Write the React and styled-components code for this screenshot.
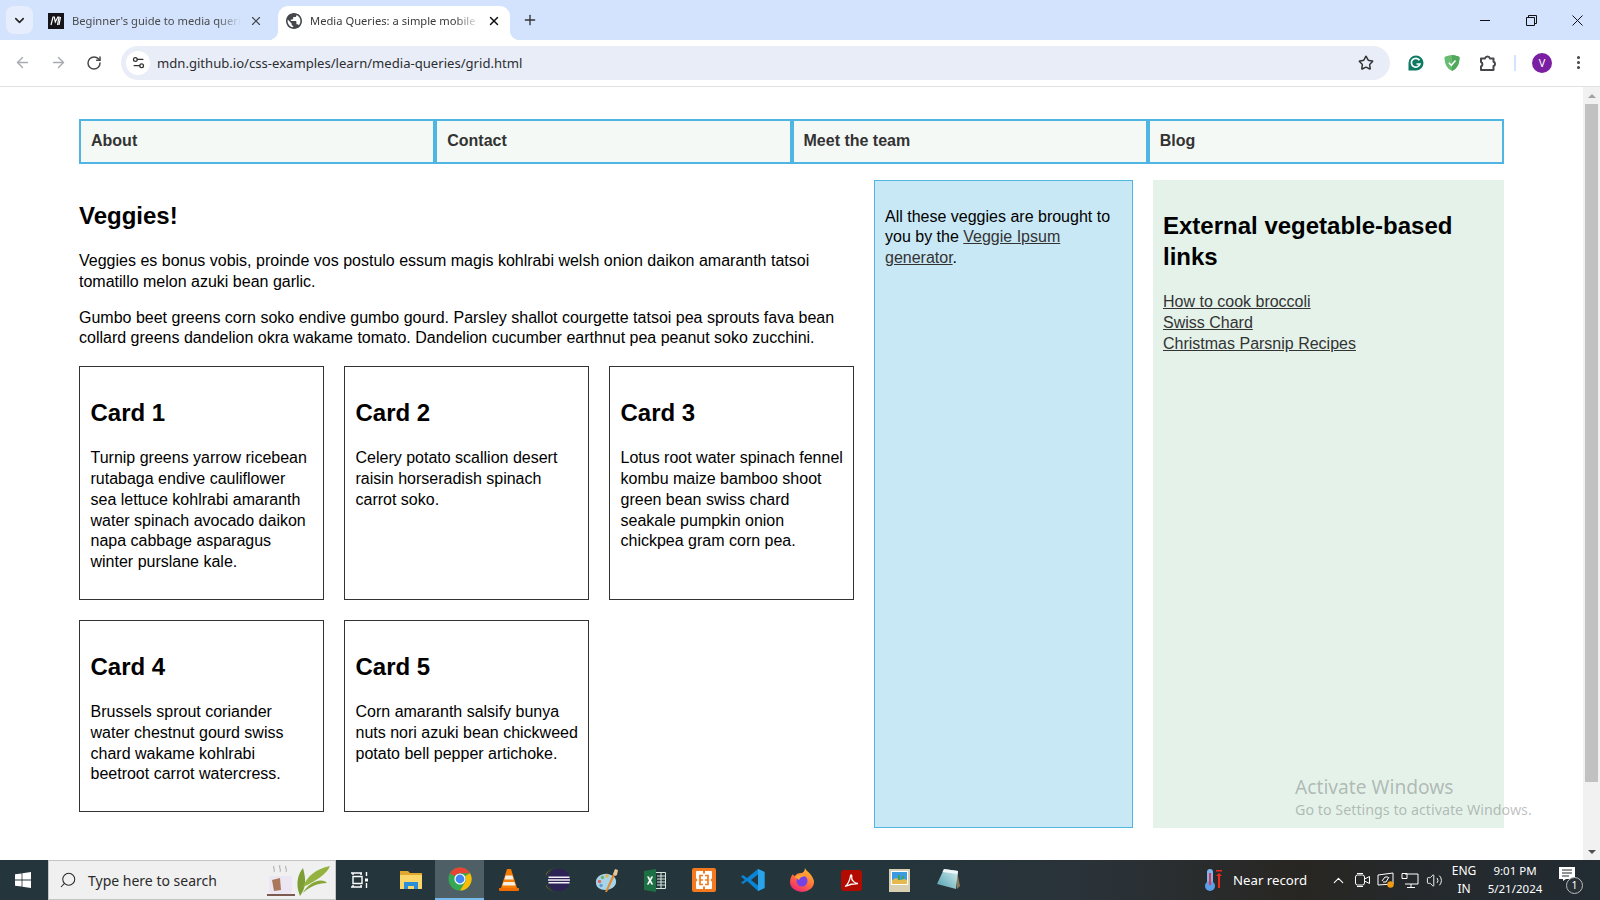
import styled, { createGlobalStyle } from 'styled-components';
import {
  ChevronDown, ChevronUp, X, Plus, ArrowLeft, ArrowRight, RotateCw, Star,
  EllipsisVertical, Settings2, Search, Volume2,
} from 'lucide-react';

const GlobalStyle = createGlobalStyle`
  html, body { margin: 0; padding: 0; height: 100%; overflow: hidden; }
  body { font-family: "Liberation Sans", Arial, sans-serif; background: #fff; }
  * { box-sizing: border-box; }
`;

const Screen = styled.div`
  width: 1600px;
  height: 900px;
  display: flex;
  flex-direction: column;
  position: relative;
  overflow: hidden;
`;

/* browser chrome */
const TabStrip = styled.div`
  height: 40px;
  background: #d3e3fd;
  display: flex;
  align-items: flex-end;
  padding-left: 6px;
  flex-shrink: 0;
`;
const TabSearch = styled.div`
  width: 27px;
  height: 28px;
  margin: 0 1px 6px 0;
  border-radius: 8px;
  background: #e6eefd;
  display: flex;
  align-items: center;
  justify-content: center;
  color: #222;
`;
const Tab = styled.div`
  position: relative;
  width: ${p => p.$w}px;
  height: 34px;
  display: flex;
  align-items: center;
  padding: 0 ${p => p.$pr}px 5px ${p => p.$pl}px;
  gap: 8px;
  border-radius: 10px 10px 0 0;
  background: ${p => (p.$active ? '#fff' : 'transparent')};
  color: ${p => (p.$active ? '#3a3a3a' : '#4a4a4a')};
  font: 11.2px "Noto Sans", sans-serif;

  ${p => p.$active && `
    &::before, &::after {
      content: '';
      position: absolute;
      bottom: 0;
      width: 10px;
      height: 10px;
    }
    &::before {
      left: -10px;
      background: radial-gradient(circle at 0 0, transparent 10px, #fff 10.5px);
    }
    &::after {
      right: -10px;
      background: radial-gradient(circle at 100% 0, transparent 10px, #fff 10.5px);
    }
  `}
`;
const TabTitle = styled.span`
  flex: 1;
  overflow: hidden;
  white-space: nowrap;
  -webkit-mask-image: linear-gradient(to right, #000 86%, transparent 100%);
  mask-image: linear-gradient(to right, #000 86%, transparent 100%);
`;
const NewTab = styled.div`
  margin: 0 0 8px 12px;
  height: 24px;
  display: flex;
  align-items: center;
  color: #333;
`;
const WindowButtons = styled.div`
  margin-left: auto;
  align-self: stretch;
  display: flex;
`;
const WindowButton = styled.div`
  width: 46px;
  display: flex;
  align-items: center;
  justify-content: center;
`;
const Toolbar = styled.div`
  height: 47px;
  background: #fff;
  border-bottom: 1px solid #e2e2e2;
  border-radius: 10px 10px 0 0;
  display: flex;
  align-items: center;
  padding: 0 0 1px 4px;
  flex-shrink: 0;
`;
const NavIcon = styled.div`
  width: 36px;
  display: flex;
  justify-content: center;
  color: ${p => (p.$off ? '#a8abb0' : '#45474a')};
`;
const Omnibox = styled.div`
  margin-left: 9px;
  width: 1269px;
  height: 34px;
  border-radius: 17px;
  background: #e9edf7;
  display: flex;
  align-items: center;
  padding: 0 16px 0 5px;
`;
const SiteButton = styled.div`
  width: 24px;
  height: 24px;
  border-radius: 50%;
  background: #fff;
  display: flex;
  align-items: center;
  justify-content: center;
  color: #333;
  margin-right: 7px;
`;
const Url = styled.div`
  flex: 1;
  font: 13.1px "Noto Sans", sans-serif;
  color: #2b2d31;
`;
const ToolIcons = styled.div`
  flex: 1;
  display: flex;
  align-items: center;
  padding-left: 8px;
  color: #45474a;
`;
const ToolIcon = styled.div`
  width: 36px;
  display: flex;
  justify-content: center;
`;
const ToolDivider = styled.div`
  width: 2px;
  height: 16px;
  background: #d3e3fd;
  margin: 0 8px;
`;
const Avatar = styled.div`
  width: 20px;
  height: 20px;
  border-radius: 50%;
  background: #7b1fa2;
  color: #fff;
  font: 11px "Noto Sans", sans-serif;
  display: flex;
  align-items: center;
  justify-content: center;
`;

/* page */
const Viewport = styled.div`
  flex: 1;
  display: flex;
  min-height: 0;
`;
const Page = styled.div`
  flex: 1;
  min-width: 0;
  padding: 32px 79px 0;
  overflow: hidden;
  font-size: 16px;
  line-height: 20.8px;
  color: #000;
`;
const TopNav = styled.ul`
  list-style: none;
  display: flex;
  margin: 0 0 16px;
  padding: 0;
`;
const TopNavItem = styled.li`
  flex: 1;
  height: 45px;
  border: 2.5px solid #4fb6e3;
  background: #f5f9f6;
  padding: 0 10px 1px;
  display: flex;
  align-items: center;
  font-weight: 700;
  color: #333;
`;
const Columns = styled.div`
  display: grid;
  grid-template-columns: 775px 259px 351px;
  gap: 20px;
`;
const Main = styled.main``;
const Title = styled.h1`
  font-size: 24px;
  line-height: 30px;
  margin: 21px 0 20px;
`;
const Para = styled.p`
  margin: 0 0 15px;
`;
const CardGrid = styled.div`
  display: grid;
  grid-template-columns: repeat(3, 245px);
  gap: 20px;
  margin-top: 17px;
`;
const Card = styled.article`
  border: 1px solid #333;
  padding: 0 9px 0 10.5px;
`;
const CardTitle = styled.h2`
  font-size: 24px;
  line-height: 30px;
  margin: 31px 0 20px;
`;
const CardText = styled.p`
  margin: 0 0 26px;
`;
const Credit = styled.aside`
  height: 648px;
  background: #c9e8f5;
  border: 1px solid #4fb6e3;
  padding: 25.5px 10px;
`;
const Links = styled.aside`
  height: 648px;
  background: #e4f2ea;
  padding: 30px 10px;
`;
const LinksTitle = styled.h2`
  font-size: 24px;
  line-height: 31px;
  margin: 0 0 20px;
`;
const LinkList = styled.ul`
  list-style: none;
  margin: 0;
  padding: 0;
`;
const PageLink = styled.a`
  color: #333;
  text-decoration: underline;
`;
const Scrollbar = styled.div`
  width: 17px;
  background: #f1f1f1;
  display: flex;
  flex-direction: column;
  align-items: center;
  justify-content: space-between;
  position: relative;
  flex-shrink: 0;
`;
const ScrollArrow = styled.div`
  width: 0;
  height: 0;
  margin: 7px 0 6px;
  border-left: 4px solid transparent;
  border-right: 4px solid transparent;
  ${p => (p.$down
    ? `border-top: 4px solid ${p.$c};`
    : `border-bottom: 4px solid ${p.$c};`)}
`;
const ScrollThumb = styled.div`
  position: absolute;
  top: 17px;
  left: 2px;
  width: 13px;
  height: 678px;
  background: #c1c1c1;
`;
const Activate = styled.div`
  position: absolute;
  left: 1295px;
  top: 774px;
  color: rgba(80, 80, 80, 0.36);
  font: 14.3px "Noto Sans", sans-serif;
  pointer-events: none;
  line-height: 21px;
`;
const ActivateTitle = styled.div`
  font-size: 19.2px;
  line-height: 25px;
`;

/* taskbar */
const Taskbar = styled.div`
  height: 40px;
  background: linear-gradient(to right, #25353c 0, #25353c 900px, #2a3238 1100px, #282622 1300px, #25292c 1420px, #222c33 1600px);
  display: flex;
  align-items: stretch;
  flex-shrink: 0;
  color: #fff;
`;
const StartButton = styled.div`
  width: 45px;
  margin-right: 3px;
  display: flex;
  align-items: center;
  justify-content: center;
`;
const SearchBox = styled.div`
  width: 288px;
  background: #f0f0f0;
  border: 1px solid #c4c4c4;
  color: #2a2a2a;
  display: flex;
  align-items: center;
  padding: 0 4px 0 10px;
  gap: 11px;
  font: 14px "Noto Sans", sans-serif;
`;
const SearchText = styled.span`
  flex: 1;
`;
const TaskIcons = styled.div`
  display: flex;
`;
const TaskIcon = styled.div`
  width: 48.9px;
  display: flex;
  align-items: center;
  justify-content: center;
  background: ${p => (p.$active ? '#4f5f66' : 'transparent')};
  border-bottom: ${p => (p.$active ? '2px solid #76b9ed' : '0')};

  &:first-child {
    width: 50.6px;
    padding-right: 2px;
  }
`;
const Tray = styled.div`
  margin-left: auto;
  display: flex;
  align-items: center;
  padding-right: 10px;
  font: 13.2px "Noto Sans", sans-serif;
`;
const Weather = styled.div`
  display: flex;
  align-items: center;
  gap: 7px;
  margin-right: 19px;
  white-space: nowrap;
`;
const TrayIcon = styled.div`
  width: 24px;
  display: flex;
  justify-content: center;
`;
const Lang = styled.div`
  width: 36px;
  text-align: center;
  font-size: 12px;
  line-height: 18.5px;
`;
const Clock = styled.div`
  width: 60px;
  margin-left: 3px;
  margin-right: -1px;
  white-space: nowrap;
  display: flex;
  flex-direction: column;
  align-items: center;
  font-size: 11.5px;
  line-height: 18.5px;
`;
const Notify = styled.div`
  position: relative;
  width: 46px;
  height: 26px;
  display: flex;
  justify-content: center;
`;
const NotifyBadge = styled.div`
  position: absolute;
  left: 22px;
  top: 10px;
  width: 17px;
  height: 17px;
  border-radius: 50%;
  border: 1px solid #bbb;
  background: #2a3136;
  font-size: 10.5px;
  line-height: 15px;
  text-align: center;
`;

const MdnIcon = () => (
  <svg width="16" height="16" viewBox="0 0 16 16">
    <rect width="16" height="16" fill="#15141a" />
    <path d="M3 12 5 4h1.3l1 5 2.5-5H11l-1.5 8M12.5 4 11 12" stroke="#fff" fill="none" strokeWidth="1.2" />
  </svg>
);
const GlobeIcon = () => (
  <svg width="16" height="16" viewBox="2 2 20 20">
    <path fill="#45474a" d="M12 2C6.48 2 2 6.48 2 12s4.48 10 10 10 10-4.48 10-10S17.52 2 12 2zm-1 17.93c-3.95-.49-7-3.85-7-7.93 0-.62.08-1.21.21-1.79L9 15v1c0 1.1.9 2 2 2v1.93zm6.9-2.54c-.26-.81-1-1.39-1.9-1.39h-1v-3c0-.55-.45-1-1-1H8v-2h2c.55 0 1-.45 1-1V7h2c1.1 0 2-.9 2-2v-.41c2.93 1.19 5 4.06 5 7.41 0 2.08-.8 3.97-2.1 5.39z" />
  </svg>
);
const WinMinimize = () => (
  <svg width="10" height="10" viewBox="0 0 10 10" stroke="#111"><path d="M0 5.5h10" /></svg>
);
const WinRestore = () => (
  <svg width="11" height="11" viewBox="0 0 11 11" fill="none" stroke="#111">
    <path d="M.5 2.5h8v8h-8zM2.5 2.5v-2h8v8h-2" />
  </svg>
);
const WinClose = () => (
  <svg width="11" height="11" viewBox="0 0 11 11" fill="none" stroke="#111"><path d="M.5.5l10 10M10.5.5l-10 10" /></svg>
);
const ExtensionIcon = () => (
  <svg width="18" height="18" viewBox="0 0 18 18" fill="none" stroke="#45474a" strokeWidth="2" strokeLinejoin="round">
    <path d="M2 4.5h4a2.6 2.6 0 0 1 5 0h3.5v3.300a2.200 2.200 0 0 1 0 4.200v4H2v-3.500a2.500 2.500 0 0 0 0-4.500z" />
  </svg>
);
const WinLogo = () => (
  <svg width="16" height="16" viewBox="0 0 16 16" fill="#fff">
    <path d="M0 2.3 6.6 1.4V7.6H0zM7.4 1.3 16 0V7.6H7.4zM0 8.4H6.6V14.6L0 13.7zM7.4 8.4H16V16L7.4 14.7z" />
  </svg>
);
const TeaLeaf = () => (
  <svg width="64" height="34" viewBox="0 0 64 34">
    <path d="M2 13h23v14a4 4 0 0 1-4 4H6a4 4 0 0 1-4-4z" fill="#ece6f3" />
    <path d="M5 17l8-2 1 12-7 1z" fill="#a9775a" />
    <path d="M0 31h28v2H0z" fill="#7b5a50" />
    <path d="M7 3c-2 2 2 3 0 6M13 2c-2 3 2 4 0 7M19 3c-2 2 2 3 0 6" stroke="#b5b5b5" strokeWidth="1.2" fill="none" />
    <path d="M33 33c5-7 7-14 3-28-5 6-8 16-3 28z" fill="#7d9e35" />
    <path d="M36 24C40 13 49 6 63 3c-3 8-14 15-27 21z" fill="#94b23f" />
    <path d="M36 30c6-6 15-10 24-10-6-6-19 0-24 10z" fill="#86a637" />
  </svg>
);
const TaskView = () => (
  <svg width="18" height="16" viewBox="0 0 18 16" fill="none" stroke="#fff" strokeWidth="1.4">
    <path d="M0 1h11M0 15h11M2 4.5h9v7H2zM2 1v2M10 1v2M2 13v2M10 13v2M15.5 0v4M15.5 11v5" />
    <path d="M14 6.5h3v3h-3z" fill="#fff" stroke="none" />
  </svg>
);
const Explorer = () => (
  <svg width="22" height="20" viewBox="0 0 22 20">
    <path d="M0 1h8l2 2h12v15a1 1 0 0 1-1 1H0z" fill="#e0a82e" />
    <path d="M0 5h22v13a1 1 0 0 1-1 1H0z" fill="#fbd66a" />
    <path d="M4 12h14v7h-4v-3H8v3H4z" fill="#2b8fd8" />
  </svg>
);
const Chrome = () => (
  <svg width="24" height="24" viewBox="0 0 24 24">
    <circle cx="12" cy="12" r="11.5" fill="#34a853" />
    <path d="M12 .5A11.5 11.5 0 0 1 22 6.2H12A6 6 0 0 0 6.7 9.2L2.1 6.2A11.5 11.5 0 0 1 12 .5z" fill="#ea4335" />
    <path d="M22 6.2A11.5 11.5 0 0 1 12 23.5L17.2 15A6 6 0 0 0 17.2 9z" fill="#fbbc05" />
    <circle cx="12" cy="12" r="5.6" fill="#fff" />
    <circle cx="12" cy="12" r="4.4" fill="#4285f4" />
  </svg>
);
const Vlc = () => (
  <svg width="20" height="24" viewBox="0 0 20 24">
    <path d="M8 1h4l6 19H2z" fill="#f57c00" />
    <path d="M6.6 7.5h6.8l1.2 4H5.4zM4.6 14h10.800l1.200 3.500H3.400z" fill="#f5efe6" />
    <path d="M0 20h20v2a1 1 0 0 1-1 1H1a1 1 0 0 1-1-1z" fill="#ef6c00" />
  </svg>
);
const Eclipse = () => (
  <svg width="24" height="24" viewBox="0 0 24 24">
    <path d="M11 0a12 12 0 0 0 0 24A12 11.5 0 0 1 11 0z" fill="#f7941e" />
    <circle cx="13" cy="12" r="11" fill="#2c2255" />
    <path d="M2.5 8.5h21V10h-21zM2 11.3h22v1.500H2zM2.500 14h21v1.500h-21z" fill="#f4f1f8" />
  </svg>
);
const Palette = () => (
  <svg width="24" height="24" viewBox="0 0 24 24">
    <path d="M1 15C0 9 7 5 13 6c5 1 9 4 8 9-1 4-5 7-11 7-5 0-9-3-9-7z" fill="#a9d3e6" />
    <circle cx="4.5" cy="13.5" r="1.7" fill="#e06666" />
    <circle cx="7.5" cy="9.5" r="1.7" fill="#70b070" />
    <circle cx="12" cy="8" r="1.7" fill="#e6b24a" />
    <circle cx="6" cy="17.5" r="1.7" fill="#5aa0d0" />
    <path d="M10 24 18 6l2 1-8 17z" fill="#e08a2e" />
    <path d="M18 6l2-5 3 1-1 5-2 1z" fill="#e7c79a" />
  </svg>
);
const Excel = () => (
  <svg width="22" height="23" viewBox="0 0 22 23">
    <path d="M12 3.5h9.5v16H12M13 7h8M13 10h8M13 13h8M13 16h8M17 4v15" fill="none" stroke="#d8e7dc" />
    <path d="M0 2 12 0v23L0 21z" fill="#1d7044" />
    <path d="M3 7.5h2l1 2.4 1.2-2.4h2L7 11.5l2.3 4h-2L6 13l-1.200 2.500h-2L5 11.500z" fill="#fff" />
  </svg>
);
const Xampp = () => (
  <svg width="24" height="24" viewBox="0 0 24 24">
    <rect width="24" height="24" rx="2" fill="#f37a20" />
    <path d="M5 3h6v2.500h2V3h6a1 1 0 0 1 1 1v6l-1.500 2L20 14v6a1 1 0 0 1-1 1h-6v-2.500h-2V21H5a1 1 0 0 1-1-1v-6l1.500-2L4 10V4a1 1 0 0 1 1-1z" fill="#fff" />
    <path d="M11 7.5H8v9h3M8 12h3M13 7.5h3v9h-3M16 12h-3" fill="none" stroke="#f37a20" strokeWidth="1.7" />
  </svg>
);
const VsCode = () => (
  <svg width="24" height="24" viewBox="0 0 24 24">
    <path d="M17 1 23.5 4v16L17 23 6 13l-4 3-2-1.5L4 12 0 8.5 2 7l4 3z" fill="#0a84d6" />
    <path d="M17 6.5 10 12l7 5.5z" fill="#25353c" />
    <path d="M17 1 23.5 4v16L17 23z" fill="#2aa3ea" />
  </svg>
);
const Firefox = () => (
  <svg width="24" height="24" viewBox="0 0 24 24">
    <defs>
      <linearGradient id="foxBody" x1="0.8" y1="0" x2="0.2" y2="1">
        <stop offset="0" stopColor="#ffc42e" />
        <stop offset="0.5" stopColor="#ff7139" />
        <stop offset="1" stopColor="#f0207a" />
      </linearGradient>
    </defs>
    <path d="M15 0c1 3 4 4 6 7 2 3 3 5 3 7a12 10 0 0 1-24 0c0-3 1-6 3-8 0 1 1 2 2 2 1-2 3-3 6-3 2 0 4-2 4-5z" fill="url(#foxBody)" />
    <circle cx="12" cy="13" r="5.5" fill="#7542e5" />
    <path d="M5 9c2-3 8-3 11-1-3 0-6 1-7 4z" fill="#ffa436" />
  </svg>
);
const Acrobat = () => (
  <svg width="21" height="21" viewBox="0 0 21 21">
    <rect width="21" height="21" rx="3" fill="#b30b00" />
    <path d="M4 16.5c2.500-1.500 5-6.500 5.500-10.500.3-2 1.700-1 1.200 1-.5 3 2.800 6.500 6.300 6.500-4 0-9 1-13 3z" fill="none" stroke="#fff" strokeWidth="1.3" />
  </svg>
);
const Pictures = () => (
  <svg width="21" height="23" viewBox="0 0 21 23">
    <rect width="21" height="23" fill="#d9d0b4" />
    <rect x="2" y="2" width="17" height="14" fill="#fff" />
    <rect x="3" y="3" width="15" height="12" fill="#3b9ae0" />
    <path d="M3 11l4-2 5 2 3-1 3 1v4H3z" fill="#e4b94e" />
    <path d="M9 6h2v5H9zM13 7h2v3h-2z" fill="#3fa45b" />
  </svg>
);
const Notepad = () => (
  <svg width="23" height="22" viewBox="0 0 23 22">
    <defs>
      <linearGradient id="padFace" x1="0" y1="1" x2="1" y2="0">
        <stop offset="0" stopColor="#4e9fae" />
        <stop offset="1" stopColor="#d6eef0" />
      </linearGradient>
    </defs>
    <path d="M20 2l3 15-3 3z" fill="#8a7a55" />
    <path d="M7 0l14 2-2 18L0 15z" fill="url(#padFace)" />
    <path d="M7 0l14 2-.5 3L5.5 3z" fill="#eef6f7" />
  </svg>
);
const Grammarly = () => (
  <svg width="16" height="16" viewBox="0 0 16 16">
    <path d="M8 .5a7.5 7.5 0 1 1 0 15H.5V8A7.5 7.5 0 0 1 8 .5z" fill="#0f7a63" />
    <path d="M11.5 5.3A4.4 4.4 0 1 0 12 9H8.5" fill="none" stroke="#fff" strokeWidth="1.7" />
  </svg>
);
const Shield = () => (
  <svg width="16" height="16" viewBox="0 0 16 16">
    <path d="M8 0C5.5 0 2.5 1 .5 2c0 6 1.5 11 7.5 14 6-3 7.500-8 7.500-14C13.500 1 10.500 0 8 0z" fill="#68bc71" />
    <path d="M8 0c2.5 0 5.5 1 7.5 2 0 6-1.500 11-7.500 14z" fill="#4fa85c" />
    <path d="M4.8 7.8 7.3 10.300 11.500 5.500" fill="none" stroke="#fff" strokeWidth="1.5" />
  </svg>
);
const Thermo = () => (
  <svg width="22" height="24" viewBox="0 0 22 24">
    <rect x="3" y="1" width="6" height="16" rx="3" fill="#7cb6ee" />
    <circle cx="6" cy="18" r="5" fill="#5b9fe8" />
    <rect x="5" y="5" width="2" height="12" fill="#e8344a" />
    <path d="M12 2h6v1.6h-6zM15 5l3 3h-2v12h-2V8h-2z" fill="#ee2a1e" />
  </svg>
);
const Meet = () => (
  <svg width="17" height="18" viewBox="0 0 17 18" fill="none" stroke="#fff">
    <path d="M3 2.5h6M3 15.5h6M1.5 6a2 2 0 0 1 2-2h5a2 2 0 0 1 2 2v6a2 2 0 0 1-2 2h-5a2 2 0 0 1-2-2zM10.5 8l5-2.500v7l-5-2.500" />
  </svg>
);
const Sync = () => (
  <svg width="18" height="18" viewBox="0 0 18 18">
    <path d="M1 4l15-2v11l-15 1z" fill="none" stroke="#fff" />
    <path d="M5 10l3-4h3M12 6l-3 5H6" fill="none" stroke="#fff" />
    <circle cx="13.5" cy="13.5" r="3.2" fill="#f39c12" />
  </svg>
);
const Network = () => (
  <svg width="18" height="16" viewBox="0 0 18 16" fill="none" stroke="#fff">
    <path d="M4 2h13v10H4M10 12v3M6 15.5h8M1 1.5h5v5H1z" />
  </svg>
);
const Message = () => (
  <svg width="16" height="14" viewBox="0 0 16 14">
    <path d="M0 0h16v12H7l-3 2v-2H0z" fill="#fff" />
    <path d="M3 3h10M3 6h10M3 9h7" stroke="#222b30" />
  </svg>
);

const navItems = ['About', 'Contact', 'Meet the team', 'Blog'];

const cards = [
  { title: 'Card 1', text: 'Turnip greens yarrow ricebean rutabaga endive cauliflower sea lettuce kohlrabi amaranth water spinach avocado daikon napa cabbage asparagus winter purslane kale.' },
  { title: 'Card 2', text: 'Celery potato scallion desert raisin horseradish spinach carrot soko.' },
  { title: 'Card 3', text: 'Lotus root water spinach fennel kombu maize bamboo shoot green bean swiss chard seakale pumpkin onion chickpea gram corn pea.' },
  { title: 'Card 4', text: 'Brussels sprout coriander water chestnut gourd swiss chard wakame kohlrabi beetroot carrot watercress.' },
  { title: 'Card 5', text: 'Corn amaranth salsify bunya nuts nori azuki bean chickweed potato bell pepper artichoke.' },
];

const links = ['How to cook broccoli', 'Swiss Chard', 'Christmas Parsnip Recipes'];

const taskIcons = [TaskView, Explorer, Chrome, Vlc, Eclipse, Palette, Excel, Xampp, VsCode, Firefox, Acrobat, Pictures, Notepad];

export default function App() {
  return (
    <Screen>
      <GlobalStyle />
      <TabStrip>
        <TabSearch><ChevronDown size={15} strokeWidth={2.5} /></TabSearch>
        <Tab $w={244} $pl={14} $pr={15}>
          <MdnIcon />
          <TabTitle>Beginner's guide to media queries</TabTitle>
          <X size={14} color="#444" />
        </Tab>
        <Tab $w={232} $pl={8} $pr={9} $active>
          <GlobeIcon />
          <TabTitle>Media Queries: a simple mobile first</TabTitle>
          <X size={14} color="#111" strokeWidth={2.5} />
        </Tab>
        <NewTab><Plus size={16} strokeWidth={2} /></NewTab>
        <WindowButtons>
          <WindowButton><WinMinimize /></WindowButton>
          <WindowButton><WinRestore /></WindowButton>
          <WindowButton><WinClose /></WindowButton>
        </WindowButtons>
      </TabStrip>
      <Toolbar>
        <NavIcon $off><ArrowLeft size={17} /></NavIcon>
        <NavIcon $off><ArrowRight size={17} /></NavIcon>
        <NavIcon><RotateCw size={16} strokeWidth={2.2} /></NavIcon>
        <Omnibox>
          <SiteButton><Settings2 size={15} /></SiteButton>
          <Url>mdn.github.io/css-examples/learn/media-queries/grid.html</Url>
          <Star size={16} strokeWidth={2.2} color="#333" />
        </Omnibox>
        <ToolIcons>
          <ToolIcon><Grammarly /></ToolIcon>
          <ToolIcon><Shield /></ToolIcon>
          <ToolIcon><ExtensionIcon /></ToolIcon>
          <ToolDivider />
          <ToolIcon><Avatar>V</Avatar></ToolIcon>
          <ToolIcon><EllipsisVertical size={17} strokeWidth={2.4} /></ToolIcon>
        </ToolIcons>
      </Toolbar>
      <Viewport>
        <Page>
          <TopNav>
            {navItems.map(item => <TopNavItem key={item}>{item}</TopNavItem>)}
          </TopNav>
          <Columns>
            <Main>
              <Title>Veggies!</Title>
              <Para>Veggies es bonus vobis, proinde vos postulo essum magis kohlrabi welsh onion daikon amaranth tatsoi tomatillo melon azuki bean garlic.</Para>
              <Para>Gumbo beet greens corn soko endive gumbo gourd. Parsley shallot courgette tatsoi pea sprouts fava bean collard greens dandelion okra wakame tomato. Dandelion cucumber earthnut pea peanut soko zucchini.</Para>
              <CardGrid>
                {cards.map(card => (
                  <Card key={card.title}>
                    <CardTitle>{card.title}</CardTitle>
                    <CardText>{card.text}</CardText>
                  </Card>
                ))}
              </CardGrid>
            </Main>
            <Credit>All these veggies are brought to you by the <PageLink href="#">Veggie Ipsum generator</PageLink>.</Credit>
            <Links>
              <LinksTitle>External vegetable-based links</LinksTitle>
              <LinkList>
                {links.map(link => <li key={link}><PageLink href="#">{link}</PageLink></li>)}
              </LinkList>
            </Links>
          </Columns>
        </Page>
        <Scrollbar>
          <ScrollArrow $c="#a3a3a3" />
          <ScrollThumb />
          <ScrollArrow $c="#505050" $down />
        </Scrollbar>
      </Viewport>
      <Activate>
        <ActivateTitle>Activate Windows</ActivateTitle>
        Go to Settings to activate Windows.
      </Activate>
      <Taskbar>
        <StartButton><WinLogo /></StartButton>
        <SearchBox>
          <Search size={18} strokeWidth={1.4} style={{ transform: 'scaleX(-1)' }} />
          <SearchText>Type here to search</SearchText>
          <TeaLeaf />
        </SearchBox>
        <TaskIcons>
          {taskIcons.map((Icon, i) => (
            <TaskIcon key={i} $active={Icon === Chrome}><Icon /></TaskIcon>
          ))}
        </TaskIcons>
        <Tray>
          <Weather><Thermo />Near record</Weather>
          <TrayIcon><ChevronUp size={17} strokeWidth={1.5} /></TrayIcon>
          <TrayIcon><Meet /></TrayIcon>
          <TrayIcon><Sync /></TrayIcon>
          <TrayIcon><Network /></TrayIcon>
          <TrayIcon><Volume2 size={17} strokeWidth={1.3} /></TrayIcon>
          <Lang>ENG<br />IN</Lang>
          <Clock><span>9:01 PM</span><span>5/21/2024</span></Clock>
          <Notify>
            <Message />
            <NotifyBadge>1</NotifyBadge>
          </Notify>
        </Tray>
      </Taskbar>
    </Screen>
  );
}
